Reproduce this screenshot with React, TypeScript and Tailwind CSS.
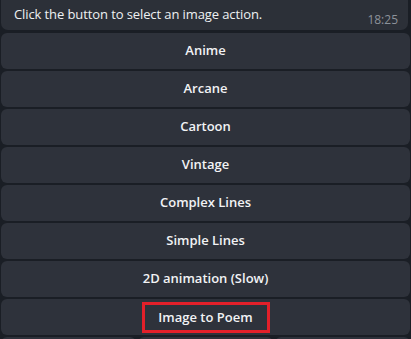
const ACTIONS = [
  'Anime',
  'Arcane',
  'Cartoon',
  'Vintage',
  'Complex Lines',
  'Simple Lines',
  '2D animation (Slow)',
];

export default function App() {
  return (
    <div
      className="w-[411px] h-[339px] overflow-hidden bg-[#1a1e25] px-[1px] text-white"
      style={{ fontFamily: '"Open Sans", "Noto Sans", sans-serif' }}
    >
      {/* message bubble */}
      <div className="mt-[-8px] mr-[2px] h-[38px] rounded-b-[7px] bg-[#2c3038] flex items-end justify-between pl-[13px] pr-[10px] pb-[2px]">
        <span className="text-[13px] leading-[18px] tracking-[-0.1px] text-[#eef0f2] mb-[5px]">
          Click the button to select an image action.
        </span>
        <span className="text-[12px] leading-[16px] text-[#8c929a]">18:25</span>
      </div>

      {/* inline keyboard */}
      <div className="mt-[3px] flex flex-col gap-[2px]">
        {ACTIONS.map((label) => (
          <button
            key={label}
            className="h-[36px] w-full rounded-[6px] bg-[#2e323b] text-[13px] font-semibold text-[#f2f3f5]"
          >
            {label}
          </button>
        ))}
        <button className="h-[36px] w-full rounded-[6px] bg-[#2e323b] flex items-center justify-center">
          <span className="w-[128px] h-[31px] mt-[1px] border-[3px] border-[#e3202a] flex items-center justify-center text-[13px] font-semibold text-[#f2f3f5]">
            Image to Poem
          </span>
        </button>
        <div className="flex gap-[2px]">
          <div className="h-[36px] flex-1 rounded-[6px] bg-[#2e323b]" />
          <div className="h-[36px] flex-1 rounded-[6px] bg-[#2e323b]" />
          <div className="h-[36px] flex-1 rounded-[6px] bg-[#2e323b]" />
        </div>
      </div>
    </div>
  );
}
